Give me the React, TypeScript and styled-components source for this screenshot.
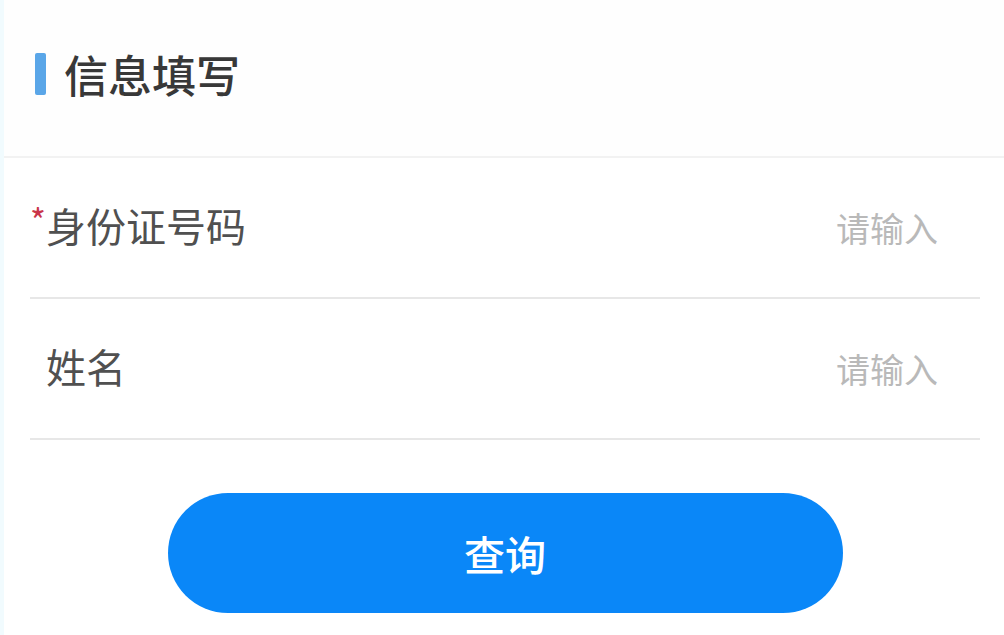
import React from 'react';
import styled, { createGlobalStyle } from 'styled-components';

const GlobalStyle = createGlobalStyle`
  html, body {
    margin: 0;
    padding: 0;
    background: #ffffff;
  }
  body {
    font-family: "Noto Sans CJK SC", "Noto Sans", sans-serif;
  }
`;

const Page = styled.div`
  width: 1004px;
  height: 635px;
  box-sizing: border-box;
  border-left: 4px solid #f1fbfe;
  background: #fff;
  overflow: hidden;
`;

const Header = styled.div`
  height: 158px;
  display: flex;
  align-items: center;
  gap: 18px;
  padding-left: 31px;
  padding-bottom: 9px;
  box-sizing: border-box;
  background: #fefefe;
  border-bottom: 2px solid #f2f2f2;
`;

const Accent = styled.span`
  width: 11px;
  height: 42px;
  border-radius: 2px;
  background: #5aa6e8;
`;

const Title = styled.h1`
  margin: 0;
  font-size: 44px;
  font-weight: 500;
  color: #383838;
  line-height: 1;
`;

const Form = styled.div`
  margin: 0 24px 0 26px;
`;

const Row = styled.div`
  height: 141px;
  display: flex;
  align-items: center;
  justify-content: space-between;
  border-bottom: 2px solid #e7e7e7;
  padding-right: 42px;
  box-sizing: border-box;
`;

const Label = styled.div`
  display: flex;
  align-items: flex-start;
  font-size: 40px;
  color: #505050;
  line-height: 1;
  padding-bottom: 6px;
`;

const Mark = styled.span<{ $show: boolean }>`
  width: 16px;
  font-size: 34px;
  line-height: 1;
  margin-top: -2px;
  color: #c9344a;
  visibility: ${(p) => (p.$show ? 'visible' : 'hidden')};
`;

const Placeholder = styled.div`
  font-size: 34px;
  color: #b9b9b9;
  line-height: 1;
`;

const Actions = styled.div`
  display: flex;
  justify-content: center;
  padding-top: 53px;
  padding-left: 2px;
`;

const Button = styled.button`
  width: 675px;
  height: 120px;
  border: none;
  border-radius: 60px;
  background: #0a87f8;
  color: #fff;
  font-family: inherit;
  font-size: 41px;
  font-weight: 500;
  line-height: 1;
`;

const fields = [
  { label: '身份证号码', required: true },
  { label: '姓名', required: false },
];

export default function App() {
  return (
    <>
      <GlobalStyle />
      <Page>
        <Header>
          <Accent />
          <Title>信息填写</Title>
        </Header>
        <Form>
          {fields.map((f) => (
            <Row key={f.label}>
              <Label>
                <Mark $show={f.required}>*</Mark>
                {f.label}
              </Label>
              <Placeholder>请输入</Placeholder>
            </Row>
          ))}
        </Form>
        <Actions>
          <Button type='button'>查询</Button>
        </Actions>
      </Page>
    </>
  );
}
